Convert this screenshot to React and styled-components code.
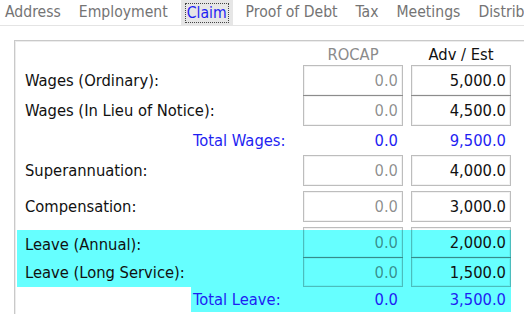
import React from "react";
import styled, { createGlobalStyle } from "styled-components";

const Global = createGlobalStyle`
  html, body { margin: 0; padding: 0; background: #ffffff; }
  body {
    font-family: "DejaVu Sans Condensed", "DejaVu Sans", "Liberation Sans", sans-serif;
    font-stretch: condensed;
    font-size: 16.4px;
    color: #111;
    width: 524px;
    height: 314px;
    overflow: hidden;
  }
`;

const Page = styled.div`
  width: 524px;
  height: 314px;
  overflow: hidden;
  display: flex;
  flex-direction: column;
`;

const TabBar = styled.div`
  display: flex;
  gap: 8px;
  height: 25px;
  border-bottom: 1px solid #e4e4e4;
  white-space: nowrap;
  flex: none;
  font-size: 15.6px;
`;

const Tab = styled.div`
  padding: 0 5px;
  height: 25px;
  line-height: 25px;
  color: ${(p) => (p.$active ? "#1f1ff2" : "#747474")};
  background: ${(p) => (p.$active ? "#e6e6e6" : "transparent")};
  display: flex;
  align-items: center;
`;

const Focus = styled.span`
  outline: 1px dotted #444;
  outline-offset: 0;
  padding: 0 1px;
  line-height: 18px;
`;

const Panel = styled.div`
  margin: 14px 0 0 14px;
  flex: 1;
  border-top: 1px solid #c9c9c9;
  border-left: 1px solid #c9c9c9;
  box-shadow: inset 1px 1px 0 #ececec;
  display: flex;
  flex-direction: column;
  width: 496px;
  padding-right: 14px;
`;

const HeaderRow = styled.div`
  display: flex;
  gap: 8px;
  height: 24px;
  align-items: center;
  padding-left: 10px;
`;

const Spacer = styled.div`
  flex: 1;
`;

const HeadCell = styled.div`
  width: 100px;
  text-align: center;
  color: ${(p) => (p.$muted ? "#8b8b8b" : "#111")};
  padding-top: 2px;
`;

const Row = styled.div`
  display: flex;
  align-items: center;
  gap: 8px;
  padding-left: 10px;
  margin-top: ${(p) => p.$top || 0}px;
`;

const Label = styled.div`
  flex: 1;
  white-space: nowrap;
`;

const Box = styled.div`
  width: 100px;
  height: ${(p) => p.$h || 31}px;
  box-sizing: border-box;
  border: 1px solid rgba(0, 0, 0, 0.26);
  box-shadow: inset 0 0 0 1px rgba(0, 0, 0, 0.05);
  display: flex;
  align-items: center;
  justify-content: flex-end;
  padding-right: 4px;
  color: ${(p) => (p.$muted ? "rgba(0,0,0,0.46)" : "#111")};
  margin-top: ${(p) => p.$shift || 0}px;
`;

const Highlight = styled.div`
  background: #66ffff;
  margin-left: 2px;
  display: flex;
  flex-direction: column;
  margin-top: ${(p) => p.$top || 0}px;
`;

const HighlightRow = styled(Row)`
  padding-left: 8px;
`;

const TotalRow = styled.div`
  display: flex;
  height: ${(p) => p.$h}px;
  align-items: center;
`;

const TotalBlock = styled.div`
  display: flex;
  align-items: center;
  gap: 8px;
  height: 100%;
  background: ${(p) => (p.$hl ? "#66ffff" : "transparent")};
  color: #1f1ff2;
`;

const TotalLabel = styled.div`
  width: 102px;
  padding-left: 2px;
  white-space: nowrap;
`;

const TotalValue = styled.div`
  width: 100px;
  box-sizing: border-box;
  text-align: right;
  padding-right: 5px;
`;

const tabs = ["Address", "Employment", "Claim", "Proof of Debt", "Tax", "Meetings", "Distributions"];

function Total({ label, a, b, hl, h }) {
  return (
    <TotalRow $h={h}>
      <Spacer />
      <TotalBlock $hl={hl}>
        <TotalLabel>{label}</TotalLabel>
        <TotalValue>{a}</TotalValue>
        <TotalValue>{b}</TotalValue>
      </TotalBlock>
    </TotalRow>
  );
}

export default function App() {
  return (
    <>
      <Global />
      <Page>
        <TabBar>
          {tabs.map((t) => (
            <Tab key={t} $active={t === "Claim"}>
              {t === "Claim" ? <Focus>{t}</Focus> : t}
            </Tab>
          ))}
        </TabBar>
        <Panel>
          <HeaderRow>
            <Spacer />
            <HeadCell $muted>ROCAP</HeadCell>
            <HeadCell>Adv / Est</HeadCell>
          </HeaderRow>
          <Row>
            <Label>Wages (Ordinary):</Label>
            <Box $muted>0.0</Box>
            <Box>5,000.0</Box>
          </Row>
          <Row $top={-1}>
            <Label>Wages (In Lieu of Notice):</Label>
            <Box $muted>0.0</Box>
            <Box>4,500.0</Box>
          </Row>
          <Total label="Total Wages:" a="0.0" b="9,500.0" h={29} />
          <Row>
            <Label>Superannuation:</Label>
            <Box $muted>0.0</Box>
            <Box>4,000.0</Box>
          </Row>
          <Row $top={5}>
            <Label>Compensation:</Label>
            <Box $muted>0.0</Box>
            <Box>3,000.0</Box>
          </Row>
          <Highlight $top={8}>
            <HighlightRow>
              <Label>Leave (Annual):</Label>
              <Box $muted $shift={-3}>0.0</Box>
              <Box $shift={-3}>2,000.0</Box>
            </HighlightRow>
            <HighlightRow $top={-1}>
              <Label>Leave (Long Service):</Label>
              <Box $muted $h={30}>0.0</Box>
              <Box $h={30}>1,500.0</Box>
            </HighlightRow>
          </Highlight>
          <Total label="Total Leave:" a="0.0" b="3,500.0" hl h={25} />
        </Panel>
      </Page>
    </>
  );
}
